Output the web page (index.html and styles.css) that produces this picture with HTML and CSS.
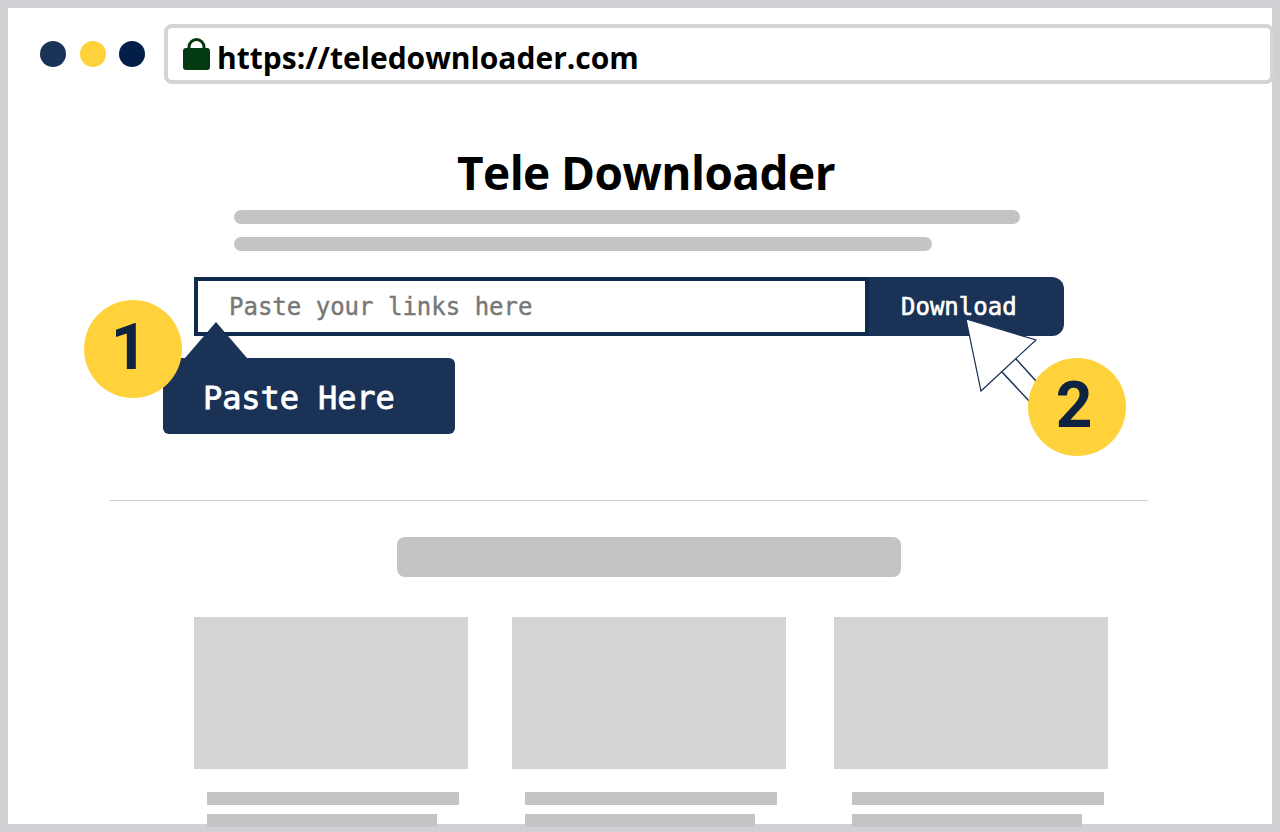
FILE: index.html
```html
<!DOCTYPE html>
<html lang="en">
<head>
    <meta charset="UTF-8">
    <meta name="viewport" content="width=device-width, initial-scale=1.0">
    <title>Tele Downloader</title>
    <link rel="stylesheet" href="styles.css">
</head>
<body>
    <div class="window">
        <div class="toolbar">
            <div class="dots">
                <span class="dot dot-navy"></span>
                <span class="dot dot-yellow"></span>
                <span class="dot dot-dark"></span>
            </div>
            <div class="address">
                <svg class="lock" width="27" height="33" viewBox="0 0 27 33">
                    <path d="M6 14V10a7.500 7.500 0 0 1 15 0V14" fill="none" stroke="#033a12" stroke-width="3"/>
                    <rect x="0" y="11" width="27" height="22" rx="3" fill="#033a12"/>
                </svg>
                <span class="url">https://teledownloader.com</span>
            </div>
        </div>

        <div class="intro">
            <h1>Tele Downloader</h1>
            <div class="bar bar-round bar-long"></div>
            <div class="bar bar-round bar-short"></div>
        </div>

        <div class="search">
            <div class="search-input">Paste your links here</div>
            <div class="search-button">Download</div>
        </div>

        <!-- Callouts laid over the page -->
        <div class="tip">
            <span class="tip-arrow"></span>
            Paste Here
        </div>
        <div class="step step-one">1</div>
        <svg class="cursor" width="85" height="95" viewBox="960 314 85 95">
            <path d="M1016 359L1036 381M1002 372L1030 402" fill="none" stroke="#1a3255" stroke-width="1.500"/>
            <path d="M966 319L1036 340L981 391Z" fill="#fff" stroke="#1a3255" stroke-width="1.200" stroke-linejoin="miter"/>
        </svg>
        <div class="step step-two">2</div>

        <div class="divider"></div>
        <div class="section-title"></div>

        <div class="cards">
            <div class="card">
                <div class="thumb"></div>
                <div class="line"></div>
                <div class="line line-short"></div>
            </div>
            <div class="card">
                <div class="thumb"></div>
                <div class="line"></div>
                <div class="line line-short"></div>
            </div>
            <div class="card card-last">
                <div class="thumb"></div>
                <div class="line"></div>
                <div class="line line-short"></div>
            </div>
        </div>
    </div>
</body>
</html>
```

FILE: styles.css
```css
* {
    margin: 0;
    padding: 0;
    box-sizing: border-box;
}

html, body {
    height: 832px;
    overflow: hidden;
    background: white;
}

.window {
    position: relative;
    width: 1280px;
    height: 832px;
    border: 8px solid #d1d1d5;
    font-family: "Open Sans", "Noto Sans", sans-serif;
}

.toolbar {
    display: flex;
    align-items: center;
    padding: 16px 0 0 32px;
}

.dots {
    display: flex;
    gap: 13.5px;
    margin-right: 19px;
    margin-top: -1px;
}

.dot {
    width: 26px;
    height: 26px;
    border-radius: 50%;
}

.dot-navy { background: #1a3255; }
.dot-yellow { background: #ffd23c; }
.dot-dark { background: #031f47; }

.address {
    display: flex;
    align-items: center;
    width: 1110px;
    height: 60px;
    flex-shrink: 0;
    padding-left: 15px;
    border: 4px solid #d4d4d4;
    border-radius: 8px;
    background: white;
}

.lock {
    margin-right: 7px;
    margin-top: -2px;
}

.url {
    font-size: 30px;
    font-weight: 700;
    color: black;
    position: relative;
    top: 3px;
}

.intro {
    padding-left: 226px;
    margin-top: 56px;
}

.intro h1 {
    width: 824px;
    font-size: 46px;
    line-height: 64px;
    font-weight: 700;
    text-align: center;
    color: black;
    margin-bottom: 6px;
    letter-spacing: -0.57px;
}

.bar {
    height: 14px;
    background: #c4c4c4;
}

.bar-round { border-radius: 7px; }
.bar-long { width: 786px; margin-bottom: 13px; }
.bar-short { width: 698px; }

.search {
    display: flex;
    width: 870px;
    height: 59px;
    margin: 26px 0 0 186px;
    font-family: "DejaVu Sans Mono", monospace;
    font-size: 24px;
}

.search-input {
    width: 675px;
    padding-left: 31px;
    line-height: 53px;
    border: 4px solid #0e2a4c;
    background: white;
    color: #777;
    -webkit-text-stroke: 0.4px #777;
}

.search-button {
    flex: 1;
    padding-left: 32px;
    line-height: 61px;
    border-radius: 0 12px 12px 0;
    background: #1a3255;
    color: white;
    font-weight: 400;
    -webkit-text-stroke: 0.6px white;
}

.tip {
    position: absolute;
    left: 155px;
    top: 350px;
    width: 292px;
    height: 76px;
    padding-left: 40px;
    border-radius: 6px;
    background: #1a3255;
    color: white;
    font-family: "DejaVu Sans Mono", monospace;
    font-size: 32px;
    font-weight: 400;
    -webkit-text-stroke: 0.8px white;
    line-height: 80px;
    letter-spacing: -0.1px;
}

.tip-arrow {
    position: absolute;
    left: 22px;
    top: -36px;
    width: 0;
    height: 0;
    border-left: 31px solid transparent;
    border-right: 31px solid transparent;
    border-bottom: 36px solid #1a3255;
}

.step {
    position: absolute;
    width: 98px;
    height: 98px;
    border-radius: 50%;
    background: #ffd23c;
    color: #0d2340;
    font-family: Roboto, sans-serif;
    font-size: 64px;
    font-weight: 700;
    line-height: 96px;
    text-align: center;
}

.step-one { left: 76px; top: 292px; padding-right: 8px; }
.step-two { left: 1020px; top: 350px; padding-right: 6px; }

.cursor {
    position: absolute;
    left: 952px;
    top: 306px;
}

.divider {
    height: 1px;
    width: 1038px;
    margin: 164px 0 0 102px;
    background: #ccc;
}

.section-title {
    width: 504px;
    height: 40px;
    margin: 36px 0 0 389px;
    border-radius: 8px;
    background: #c4c4c4;
}

.cards {
    display: flex;
    gap: 44px;
    margin: 40px 0 0 186px;
}

.card {
    width: 274px;
}

.card-last {
    margin-left: 4px;
}

.thumb {
    height: 152px;
    margin-bottom: 23px;
    background: #d4d4d4;
}

.line {
    width: 252px;
    height: 13px;
    margin: 0 0 9px 13px;
    background: #c4c4c4;
}

.card-last .line {
    margin-left: 18px;
}

.line-short {
    width: 230px;
}
```
